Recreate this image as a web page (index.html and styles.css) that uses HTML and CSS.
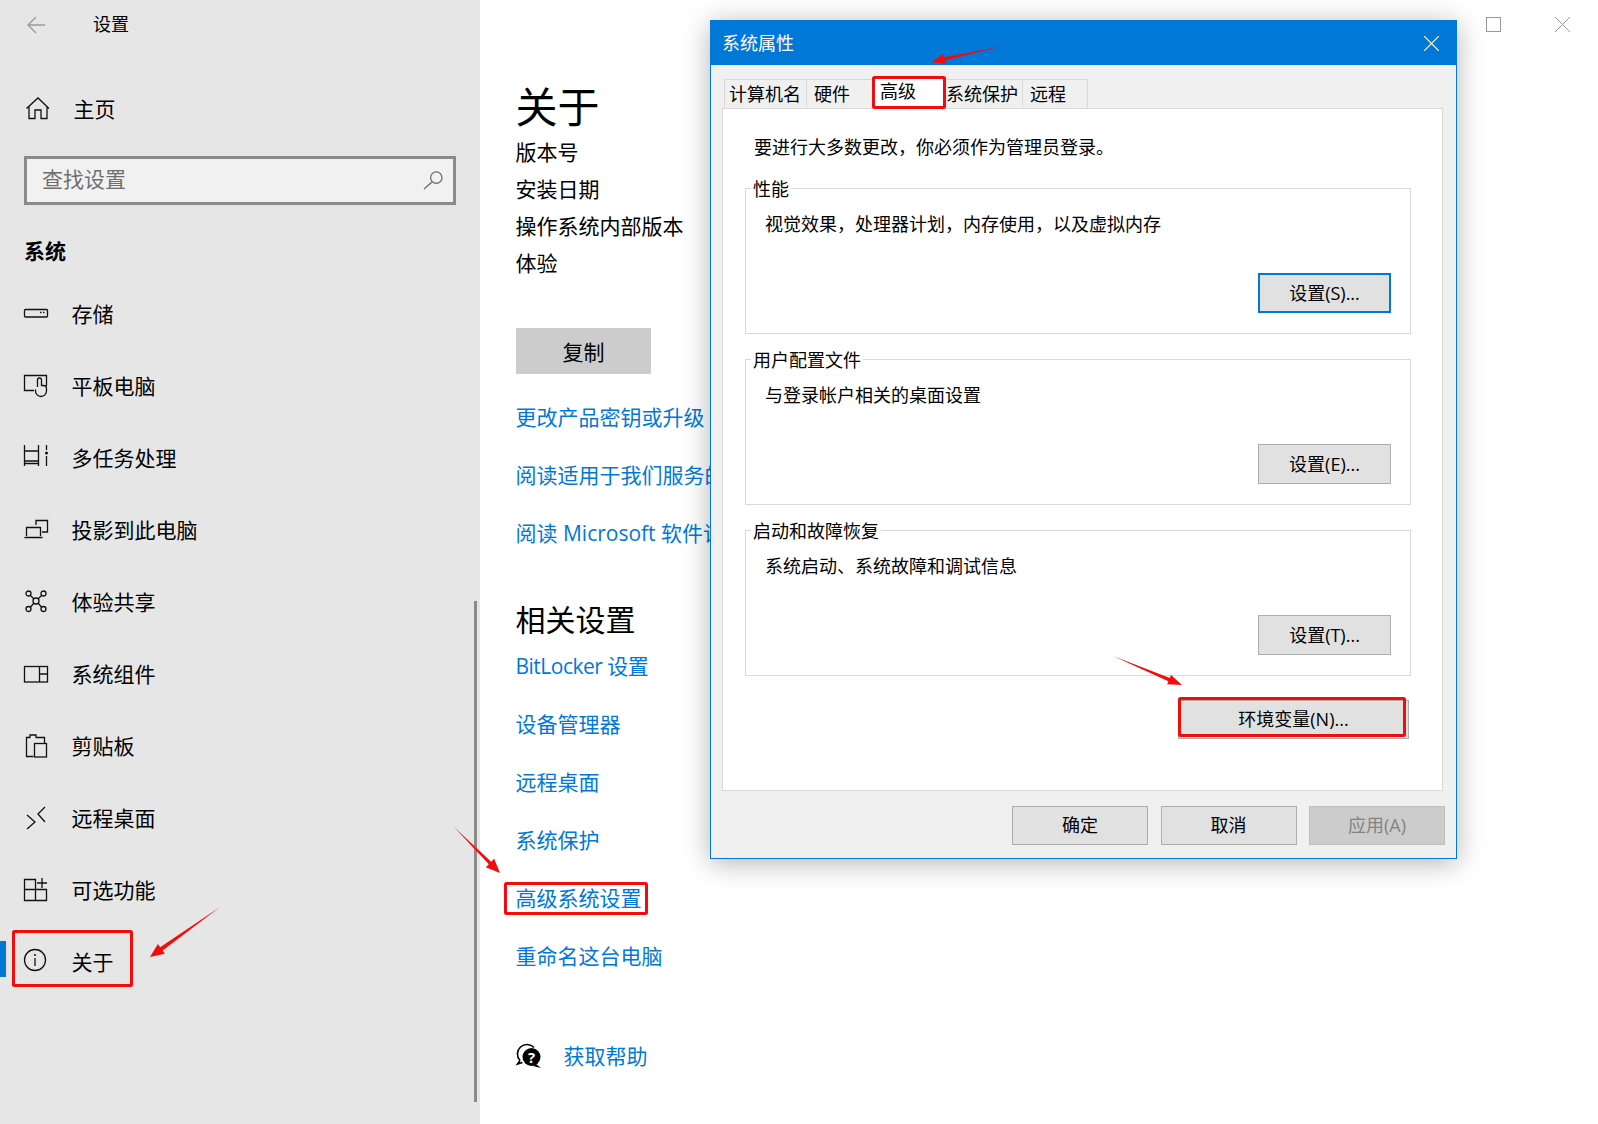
FILE: index.html
```html
<!DOCTYPE html>
<html lang="zh-CN">
<head>
    <meta charset="UTF-8">
    <title>设置</title>
    <link rel="stylesheet" href="styles.css">
</head>
<body>
    <div class="settings-window">
        <!-- left navigation -->
        <div class="sidebar">
            <div class="sidebar-head">
                <svg class="icon back-icon" viewBox="0 0 24 24"><path d="M21 12H4M12 4l-8 8 8 8"/></svg>
                <span class="sidebar-title">设置</span>
            </div>
            <div class="nav-row nav-home">
                <svg class="icon home-icon" viewBox="0 0 26 24"><path d="M2.500 11.500L14 1l11 10.500M5 9v12.500h6V13h6v8.500h6V9"/></svg>
                <span>主页</span>
            </div>
            <div class="search-box">
                <span>查找设置</span>
                <svg class="icon search-icon" viewBox="0 0 20 20"><circle cx="14" cy="7" r="6"/><path d="M9.500 11.500L1 19"/></svg>
            </div>
            <div class="section-title">系统</div>
            <div class="nav-row">
                <svg class="icon" viewBox="0 0 24 24"><rect x=".5" y="7.500" width="23" height="7.500" rx="1"/><path d="M16 10.500h1.500M19 10.500h1.500"/></svg>
                <span>存储</span>
            </div>
            <div class="nav-row">
                <svg class="icon" viewBox="0 0 24 24"><path d="M10 16.500H.5v-15h22V12M13.500 13V6a2 2 0 0 1 4 0v5.500h2a3 3 0 0 1 3 3V17a5.500 5.500 0 0 1-11 0v-1.500"/></svg>
                <span>平板电脑</span>
            </div>
            <div class="nav-row">
                <svg class="icon" viewBox="0 0 24 24"><path d="M.5-1v6h14v-6M.5 20v-5h14v5M.5 17.500h14M.5 5v10M14.500 5v10M22.500-1v5M22.500 10v10"/><circle class="dot" cx="22.500" cy="7" r="1.500"/></svg>
                <span>多任务处理</span>
            </div>
            <div class="nav-row">
                <svg class="icon" viewBox="0 0 24 24"><path d="M12 7V2.500h11.500V14H18M2.500 18V9.500h14V18M.5 19.500h18"/></svg>
                <span>投影到此电脑</span>
            </div>
            <div class="nav-row">
                <svg class="icon" viewBox="0 0 24 24"><circle cx="12" cy="11" r="3"/><circle cx="4.500" cy="3.500" r="2.500"/><circle cx="19.500" cy="3.500" r="2.500"/><circle cx="4.500" cy="19" r="2.500"/><circle cx="19.500" cy="19" r="2.500"/><path d="M6.500 5.500l3.500 3.500M17.500 5.500L14 9M6.500 17l3.500-4M17.500 17L14 13"/></svg>
                <span>体验共享</span>
            </div>
            <div class="nav-row">
                <svg class="icon" viewBox="0 0 24 24"><rect x=".5" y="4.500" width="23" height="15.500"/><path d="M15.500 4.500V20M15.500 12h8"/></svg>
                <span>系统组件</span>
            </div>
            <div class="nav-row">
                <svg class="icon" viewBox="0 0 24 24"><path d="M6 3.500H2.500v19h7M6 4V1h6v3M12 3.500h8.500V9"/><rect x="10.500" y="9.500" width="12" height="13.500"/></svg>
                <span>剪贴板</span>
            </div>
            <div class="nav-row">
                <svg class="icon" viewBox="0 0 24 24"><path d="M21 1l-7 7 7 8M3 9l8 7-8 7"/></svg>
                <span>远程桌面</span>
            </div>
            <div class="nav-row">
                <svg class="icon" viewBox="0 0 24 24"><path d="M.5 1.500h11v21H.5zM.5 11.500h22v11h-11M18 0v10M13 5h10"/></svg>
                <span>可选功能</span>
            </div>
            <div class="nav-row nav-active">
                <svg class="icon" viewBox="0 0 24 24"><circle cx="11" cy="10" r="10.500"/><path d="M11 8v8"/><circle class="dot" cx="11" cy="5" r="1"/></svg>
                <span>关于</span>
            </div>
            <div class="sidebar-scroll"></div>
        </div>

        <!-- about page -->
        <div class="content">
            <div class="window-buttons">
                <div class="max-btn"></div>
                <svg class="close-btn" viewBox="0 0 15 15"><path d="M0 0l15 15M15 0L0 15"/></svg>
            </div>
            <div class="page-title">关于</div>
            <div class="info-line">版本号</div>
            <div class="info-line">安装日期</div>
            <div class="info-line">操作系统内部版本</div>
            <div class="info-line">体验</div>
            <div class="copy-btn">复制</div>
            <div class="link-list top-links">
                <a class="link">更改产品密钥或升级</a>
                <a class="link">阅读适用于我们服务的</a>
                <a class="link">阅读 Microsoft 软件许</a>
            </div>
            <div class="related-title">相关设置</div>
            <div class="link-list">
                <a class="link link-tight">BitLocker 设置</a>
                <a class="link">设备管理器</a>
                <a class="link">远程桌面</a>
                <a class="link">系统保护</a>
                <a class="link">高级系统设置</a>
                <a class="link">重命名这台电脑</a>
            </div>
            <div class="help-row">
                <svg class="help-icon" viewBox="0 0 26 26">
                    <path class="help-back" d="M4 17.500A9 9 0 1 1 18 4.500M4 17.500L1.500 21l5-1.500"/>
                    <circle cx="15.500" cy="14" r="9"/>
                    <path d="M20 21l5 4-8-2z"/>
                    <text class="help-mark" x="15.500" y="19.500">?</text>
                </svg>
                <a class="link">获取帮助</a>
            </div>
        </div>
    </div>

    <!-- system properties dialog -->
    <div class="dialog">
        <div class="dialog-title">
            <span>系统属性</span>
            <svg class="dialog-close" viewBox="0 0 15 15"><path d="M0 0l15 15M15 0L0 15"/></svg>
        </div>
        <div class="dialog-body">
            <div class="tabs">
                <div class="tab tab-name">计算机名</div>
                <div class="tab tab-hw">硬件</div>
                <div class="tab tab-active">高级</div>
                <div class="tab tab-prot">系统保护</div>
                <div class="tab tab-remote">远程</div>
            </div>
            <div class="tab-panel">
                <div class="panel-note">要进行大多数更改，你必须作为管理员登录。</div>
                <div class="group">
                    <div class="group-label">性能</div>
                    <div class="group-text">视觉效果，处理器计划，内存使用，以及虚拟内存</div>
                    <div class="btn btn-setting btn-default">设置(S)...</div>
                </div>
                <div class="group">
                    <div class="group-label">用户配置文件</div>
                    <div class="group-text">与登录帐户相关的桌面设置</div>
                    <div class="btn btn-setting">设置(E)...</div>
                </div>
                <div class="group">
                    <div class="group-label">启动和故障恢复</div>
                    <div class="group-text">系统启动、系统故障和调试信息</div>
                    <div class="btn btn-setting">设置(T)...</div>
                </div>
                <div class="btn btn-env">环境变量(N)...</div>
            </div>
            <div class="dialog-footer">
                <div class="btn btn-footer">确定</div>
                <div class="btn btn-footer">取消</div>
                <div class="btn btn-footer btn-disabled">应用(A)</div>
            </div>
        </div>
    </div>

    <!-- red marks drawn over the screenshot -->
    <svg class="marks" viewBox="0 0 1598 1124">
        <rect x="13.500" y="931.500" width="118" height="54" rx="1"/>
        <rect x="505.500" y="883.500" width="141" height="30" rx="1"/>
        <rect x="873.500" y="77.500" width="71" height="30" rx="1"/>
        <rect x="1179.500" y="698.500" width="225" height="37" rx="1"/>
        <polygon points="220,907 162.600,950.500 164.900,953.800 150,957 157.900,944 160.200,947.300"/>
        <polygon points="454,827 491.200,861.800 494.200,858.800 500,873 485.800,867.200 488.800,864.200"/>
        <polygon points="1002,46 945.100,60.600 945.800,63.800 931,62 943.600,54 944.300,57.200"/>
        <polygon points="1113,656 1169.800,678 1171,675 1182,685 1167.200,684.200 1168.400,681.200"/>
    </svg>
</body>
</html>
```
FILE: styles.css
```css
* {
    box-sizing: border-box;
}

body {
    margin: 0;
    background: #fff;
    color: #000;
    font-family: "Open Sans", "Noto Sans CJK SC", sans-serif;
    font-size: 21px;
    overflow: hidden;
}

.settings-window {
    display: flex;
    height: 1124px;
}

.icon {
    width: 24px;
    height: 24px;
    flex-shrink: 0;
    overflow: visible;
    fill: none;
    stroke: #111;
    stroke-width: 1.3;
}

.icon .dot {
    fill: #111;
    stroke: none;
}

/* sidebar */
.sidebar {
    position: relative;
    width: 480px;
    flex-shrink: 0;
    background: #e6e6e6;
}

.sidebar-head {
    display: flex;
    align-items: center;
    height: 49px;
    padding-left: 24px;
}

.back-icon {
    stroke: #999;
}

.sidebar-title {
    margin: 0 0 3px 45px;
    font-size: 18px;
}

.nav-row {
    position: relative;
    display: flex;
    align-items: center;
    gap: 24px;
    height: 72px;
    padding-left: 24px;
}

.nav-row span {
    margin: 0 0 3px -.5px;
}

.nav-home {
    margin-top: 24px;
}

.home-icon {
    width: 26px;
}

.nav-active::before {
    content: "";
    position: absolute;
    left: 0;
    top: 15px;
    width: 6px;
    height: 36px;
    background: #0078d7;
}

.search-box {
    display: flex;
    align-items: center;
    justify-content: space-between;
    height: 49px;
    margin: 11px 24px 0;
    padding: 0 11px 0 15px;
    border: 3px solid #8a8a8a;
    background: #f1f1f1;
    color: #6f6f6f;
}

.search-box span {
    margin-bottom: 5px;
}

.search-icon {
    width: 19px;
    height: 19px;
    stroke: #666;
}

.section-title {
    height: 73px;
    padding: 27px 0 0 24px;
    font-weight: bold;
    line-height: 39px;
}

.sidebar-scroll {
    position: absolute;
    top: 601px;
    right: 3px;
    width: 3px;
    height: 501px;
    background: #8a8a8a;
}

/* page content */
.content {
    flex: 1;
    padding-left: 36px;
    white-space: nowrap;
    overflow: hidden;
}

.window-buttons {
    display: flex;
    justify-content: flex-end;
    gap: 54px;
    height: 79px;
    padding: 17px 28px 0 0;
}

.max-btn {
    width: 15px;
    height: 15px;
    border: 1px solid #999;
}

.close-btn {
    width: 15px;
    height: 15px;
    fill: none;
    stroke: #999;
}

.page-title {
    margin: 0 0 -1px -.5px;
    font-size: 42px;
    line-height: 56px;
}

.info-line {
    margin-left: -.5px;
    line-height: 37px;
}

.copy-btn {
    width: 135px;
    height: 46px;
    margin-top: 46px;
    background: #ccc;
    line-height: 48px;
    text-align: center;
}

.link-list {
    display: flex;
    flex-direction: column;
    gap: 28px;
}

.top-links {
    margin-top: 28px;
}

/* these run under the dialog, clip them at its left edge */
.top-links .link {
    display: block;
    width: 194px;
    overflow: hidden;
}

.link {
    margin-left: -.5px;
    color: #0078d7;
    line-height: 30px;
}

.link-tight {
    letter-spacing: -.5px;
}

.related-title {
    margin: 50px 0 9px -.5px;
    font-size: 30px;
    line-height: 44px;
}

.help-row {
    display: flex;
    align-items: center;
    gap: 22px;
    margin-top: 70px;
}

.help-icon {
    width: 26px;
    height: 26px;
    overflow: visible;
}

.help-back {
    fill: none;
    stroke: #000;
    stroke-width: 1.6;
}

.help-mark {
    fill: #fff;
    font-size: 15px;
    font-weight: bold;
    text-anchor: middle;
}

/* dialog */
.dialog {
    position: absolute;
    left: 710px;
    top: 20px;
    width: 747px;
    height: 839px;
    border: 1px solid #0078d7;
    background: #f0f0f0;
    box-shadow: 0 4px 26px rgba(0, 0, 0, .3);
    font-size: 18px;
}

.dialog-title {
    display: flex;
    align-items: center;
    justify-content: space-between;
    height: 44px;
    padding: 0 17px 0 11px;
    background: #0078d7;
    color: #fff;
}

.dialog-title span {
    margin-bottom: 3px;
}

.dialog-close {
    width: 15px;
    height: 15px;
    fill: none;
    stroke: #fff;
    stroke-width: 1.2;
}

.dialog-body {
    padding: 14px 11px 0;
}

.tabs {
    display: flex;
    height: 29px;
    margin-left: 2px;
}

.tab {
    height: 29px;
    border: 1px solid #d9d9d9;
    border-bottom: none;
    border-left: none;
    line-height: 28px;
}

.tab-name {
    width: 83px;
    padding-left: 4px;
    border-left: 1px solid #d9d9d9;
}

.tab-hw {
    width: 66px;
    padding-left: 7px;
    border-right: none;
}

.tab-active {
    width: 72px;
    height: 33px;
    margin-top: -3px;
    padding: 1px 0 0 7px;
    border: none;
    background: #fff;
}

.tab-prot {
    width: 78px;
    padding-left: 1px;
}

.tab-remote {
    width: 65px;
    padding-left: 7px;
}

.tab-panel {
    display: flex;
    flex-direction: column;
    height: 683px;
    margin-right: 2px;
    padding: 25px 0 0 22px;
    border: 1px solid #d9d9d9;
    background: #fff;
}

.panel-note {
    margin-left: 9px;
    line-height: 26px;
}

.group {
    display: flex;
    flex-direction: column;
    width: 666px;
    height: 146px;
    margin-top: 25px;
    border: 1px solid #d9d9d9;
}

.panel-note + .group {
    margin-top: 28px;
}

.group-label {
    align-self: flex-start;
    margin: -13px 0 0 5px;
    padding: 0 2px;
    background: #fff;
    line-height: 26px;
}

.group-text {
    margin: 9px 0 0 19px;
    line-height: 26px;
}

.btn {
    border: 1px solid #adadad;
    background: #e1e1e1;
    line-height: 37px;
    text-align: center;
}

.btn-setting {
    align-self: flex-end;
    width: 133px;
    height: 40px;
    margin: 36px 19px 0 0;
    line-height: 38px;
}

.btn-default {
    border: 2px solid #0078d7;
    line-height: 36px;
}

.btn-env {
    align-self: flex-end;
    width: 231px;
    height: 39px;
    margin: 24px 33px 0 0;
}

.dialog-footer {
    display: flex;
    justify-content: flex-end;
    gap: 12.5px;
    margin-top: 15px;
}

.btn-footer {
    width: 136px;
    height: 39px;
}

.btn-disabled {
    border-color: #bfbfbf;
    background: #ccc;
    color: #838383;
}

/* annotations */
.marks {
    position: absolute;
    left: 0;
    top: 0;
    width: 1598px;
    height: 1124px;
    pointer-events: none;
}

.marks rect {
    fill: none;
    stroke: #f40b0b;
    stroke-width: 3;
}

.marks polygon {
    fill: #f40b0b;
}
```
